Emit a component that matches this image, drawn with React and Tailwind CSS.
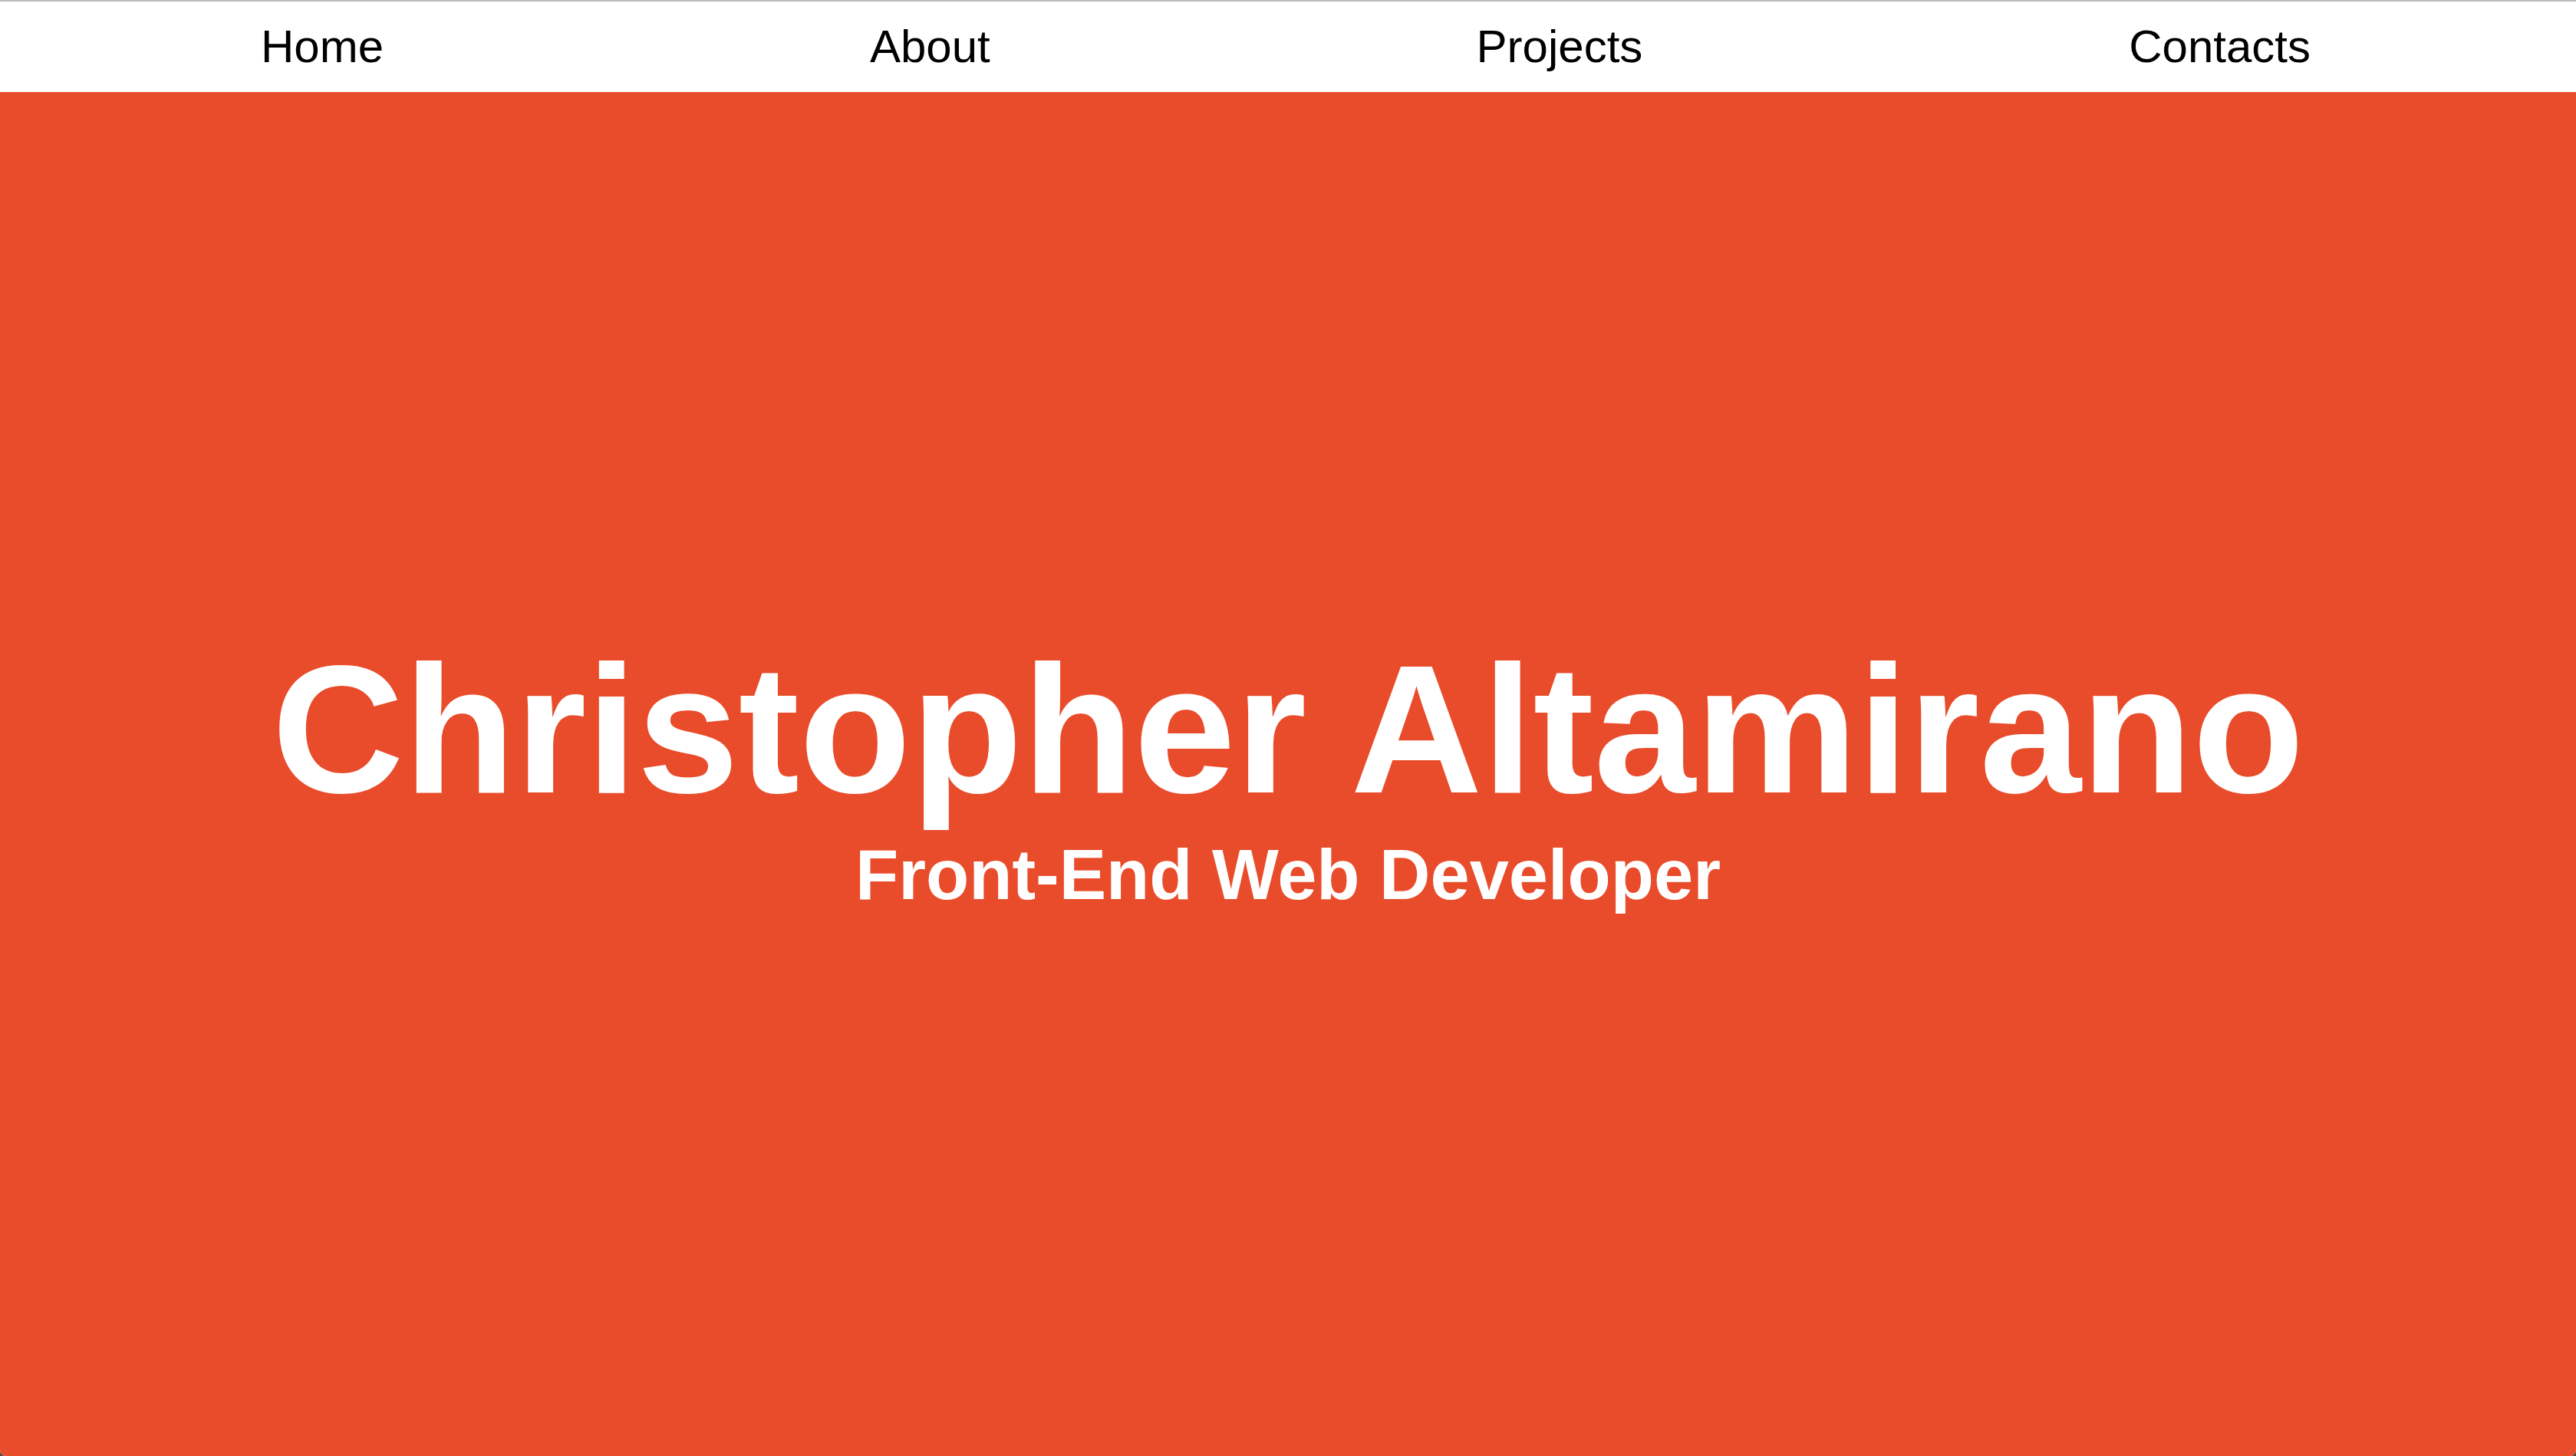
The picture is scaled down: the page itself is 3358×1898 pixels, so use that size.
import React from 'react';

const links = ['Home', 'About', 'Projects', 'Contacts'];

const App = () => {
    return (
        <div className="min-h-screen bg-[#5a4a3c]">
            <div
                className="flex flex-col h-[1898px] overflow-hidden rounded-b-[8px] bg-white"
                style={{ fontFamily: '"Liberation Sans", Arial, sans-serif' }}
            >
                {/* Top Navigation */}
                <nav className="flex h-[120px] shrink-0 items-center justify-between border-t-2 border-[#bdbdbd] bg-white pl-[340px] pr-[346px]">
                    {links.map((link) => (
                        <a key={link} href="#" className="text-[60px] leading-normal text-black">
                            {link}
                        </a>
                    ))}
                </nav>

                {/* Hero */}
                <section className="flex flex-1 flex-col items-center justify-center bg-[#e94c2a] text-white">
                    <h1 className="text-[238px] font-bold leading-none">Christopher Altamirano</h1>
                    <h2 className="mt-6 text-[92px] font-bold leading-none">Front-End Web Developer</h2>
                </section>
            </div>
        </div>
    );
};

export default App;
